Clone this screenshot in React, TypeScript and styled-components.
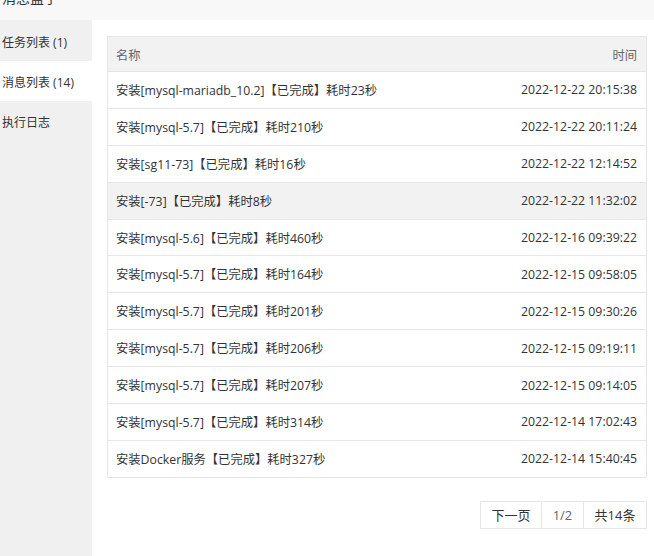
import React from "react";
import styled, { createGlobalStyle } from "styled-components";

const Global = createGlobalStyle`
  html, body { margin: 0; padding: 0; background: #fff; }
  body {
    font-family: "Open Sans", "Noto Sans CJK SC", sans-serif;
    color: #333;
    font-size: 12px;
  }
  * { box-sizing: border-box; }
`;

const Page = styled.div`
  width: 654px;
  height: 556px;
  display: flex;
  flex-direction: column;
  overflow: hidden;
`;

const TitleBar = styled.div`
  height: 20px;
  flex: none;
  background: #f8f8f8;
  overflow: hidden;
  padding-left: 2px;
`;

const Title = styled.div`
  font-size: 14px;
  line-height: 20px;
  margin-top: -12px;
  color: #333;
`;

const Body = styled.div`
  flex: 1;
  display: flex;
  min-height: 0;
`;

const Sidebar = styled.div`
  width: 92px;
  flex: none;
  background: #f0f0f0;
  display: flex;
  flex-direction: column;
  padding-top: 1px;
`;

const NavItem = styled.div<{ $active?: boolean }>`
  height: 40px;
  padding-top: 3px;
  line-height: 37px;
  padding-left: 2px;
  font-size: 12px;
  color: #333;
  white-space: nowrap;
  background: ${(p) => (p.$active ? "#fff" : "transparent")};
`;

const Content = styled.div`
  flex: 1;
  padding: 16px 7px 0 15px;
  display: flex;
  flex-direction: column;
`;

const Table = styled.div`
  border: 1px solid #e6e6e6;
  display: flex;
  flex-direction: column;
`;

const Row = styled.div<{ $head?: boolean; $hover?: boolean }>`
  display: flex;
  justify-content: space-between;
  align-items: center;
  height: ${(p) => (p.$head ? "34px" : "36.9px")};
  padding: ${(p) => (p.$head ? "1px" : "0")} 9px 0 8px;
  border-top: ${(p) => (p.$head ? "none" : "1px solid #e6e6e6")};
  background: ${(p) => (p.$head || p.$hover ? "#f2f2f2" : "#fff")};
  color: ${(p) => (p.$head ? "#666" : "#333")};
  white-space: nowrap;
  font-size: 12.3px;
`;

const Cell = styled.span``;

const Pager = styled.div`
  margin-top: 23px;
  align-self: flex-end;
  display: flex;
  border: 1px solid #e6e6e6;
  height: 28px;
`;

const PageBtn = styled.span<{ $w: number; $muted?: boolean }>`
  width: ${(p) => p.$w}px;
  display: flex;
  align-items: center;
  justify-content: center;
  font-size: 13px;
  color: ${(p) => (p.$muted ? "#666" : "#333")};
  & + & { border-left: 1px solid #e6e6e6; }
`;

const rows: [string, string][] = [
  ["安装[mysql-mariadb_10.2]【已完成】耗时23秒", "2022-12-22 20:15:38"],
  ["安装[mysql-5.7]【已完成】耗时210秒", "2022-12-22 20:11:24"],
  ["安装[sg11-73]【已完成】耗时16秒", "2022-12-22 12:14:52"],
  ["安装[-73]【已完成】耗时8秒", "2022-12-22 11:32:02"],
  ["安装[mysql-5.6]【已完成】耗时460秒", "2022-12-16 09:39:22"],
  ["安装[mysql-5.7]【已完成】耗时164秒", "2022-12-15 09:58:05"],
  ["安装[mysql-5.7]【已完成】耗时201秒", "2022-12-15 09:30:26"],
  ["安装[mysql-5.7]【已完成】耗时206秒", "2022-12-15 09:19:11"],
  ["安装[mysql-5.7]【已完成】耗时207秒", "2022-12-15 09:14:05"],
  ["安装[mysql-5.7]【已完成】耗时314秒", "2022-12-14 17:02:43"],
  ["安装Docker服务【已完成】耗时327秒", "2022-12-14 15:40:45"],
];

export default function App() {
  return (
    <Page>
      <Global />
      <TitleBar>
        <Title>消息盒子</Title>
      </TitleBar>
      <Body>
        <Sidebar>
          <NavItem>任务列表 (1)</NavItem>
          <NavItem $active>消息列表 (14)</NavItem>
          <NavItem>执行日志</NavItem>
        </Sidebar>
        <Content>
          <Table>
            <Row $head>
              <Cell>名称</Cell>
              <Cell>时间</Cell>
            </Row>
            {rows.map(([name, time], i) => (
              <Row key={i} $hover={i === 3}>
                <Cell>{name}</Cell>
                <Cell>{time}</Cell>
              </Row>
            ))}
          </Table>
          <Pager>
            <PageBtn $w={60}>下一页</PageBtn>
            <PageBtn $w={42} $muted>1/2</PageBtn>
            <PageBtn $w={63}>共14条</PageBtn>
          </Pager>
        </Content>
      </Body>
    </Page>
  );
}
